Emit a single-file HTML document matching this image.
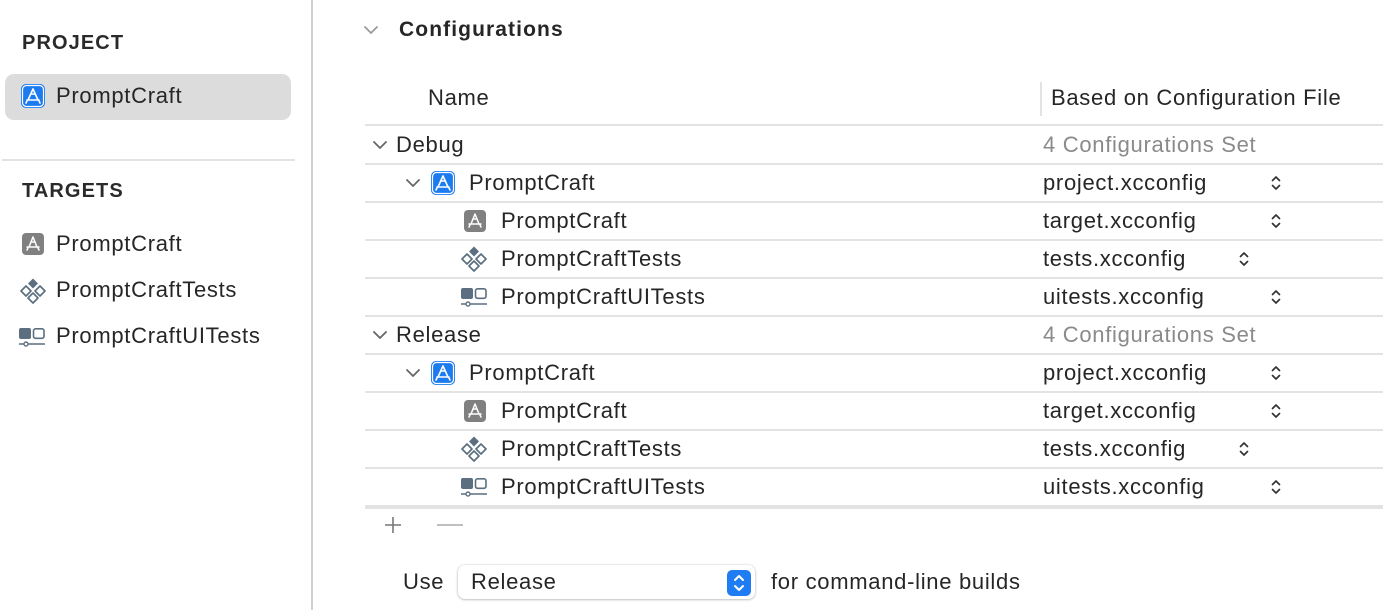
<!DOCTYPE html>
<html><head><meta charset="utf-8"><style>
*{margin:0;padding:0;box-sizing:border-box}
body{width:1383px;height:610px;background:#fff;font-family:"Liberation Sans",Arial,sans-serif;color:#262626;position:relative;overflow:hidden;font-size:22px;letter-spacing:0.7px}
.a{position:absolute;white-space:nowrap}
.h{font-weight:bold;font-size:20px;color:#2a2a2a;letter-spacing:1.1px}
.line{position:absolute;height:2px;background:#e3e3e3}
.g{color:#8a8a8a}
svg{position:absolute}
</style></head><body>
<div class="a" style="left:311px;top:0;width:2px;height:610px;background:#cfcfcf"></div>
<div class="a h" style="left:22px;top:32px">PROJECT</div>
<div class="a" style="left:5px;top:74px;width:286px;height:46px;background:#dcdcdc;border-radius:9px"></div>
<div class="line" style="left:2px;top:159px;width:293px"></div>
<div class="a h" style="left:22px;top:180px">TARGETS</div>
<div id="root"></div>
<script>
function blue(x,y){return `<svg style="left:${x}px;top:${y}px" width="26" height="26" viewBox="0 0 26 26"><rect x="1" y="1" width="24" height="24" rx="5" fill="#1d7bf0"/><rect x="2.5" y="2.5" width="21" height="21" rx="4" fill="none" stroke="#fff" stroke-width="1.2"/><path d="M13 6 L8 17 M13 6 L18 17 M11 11 L15 11 M7 17 L19 17 M7 18 L6 20 M19 18 L20 20" stroke="#fff" stroke-width="1.6" fill="none" stroke-linecap="round"/></svg>`}
function gray(x,y){return `<svg style="left:${x}px;top:${y}px" width="24" height="24" viewBox="0 0 24 24"><rect x="1" y="1" width="22" height="22" rx="4" fill="#808080"/><path d="M12 5 L8 15 M12 5 L16 15 M10 10 L14 10 M6 15 L18 15 M7 16 L6 18 M17 16 L18 18" stroke="#fff" stroke-width="1.5" fill="none" stroke-linecap="round"/></svg>`}
function tests(x,y){return `<svg style="left:${x}px;top:${y}px" width="28" height="28" viewBox="0 0 28 28"><path d="M14 1.5 L19 6.5 L14 11.5 L9 6.5Z" fill="#5c6f80"/><path d="M7 9 L12 14 L7 19 L2 14Z M21 9 L26 14 L21 19 L16 14Z M14 16 L19 21 L14 26 L9 21Z" fill="none" stroke="#5c6f80" stroke-width="1.7" stroke-linejoin="round"/></svg>`}
function ui(x,y){return `<svg style="left:${x}px;top:${y}px" width="28" height="22" viewBox="0 0 28 22"><rect x="1" y="2" width="12" height="11" rx="2" fill="#5c6f80"/><rect x="15.5" y="2.8" width="10.5" height="9.5" rx="2" fill="none" stroke="#5c6f80" stroke-width="1.6"/><path d="M1 18 H27" stroke="#5c6f80" stroke-width="1.6"/><circle cx="8" cy="18" r="2" fill="#fff" stroke="#5c6f80" stroke-width="1.4"/></svg>`}
function chev(x,y,c){c=c||'#666';return `<svg style="left:${x}px;top:${y}px" width="16" height="10" viewBox="0 0 16 10"><path d="M2 2 L8 8 L14 2" fill="none" stroke="${c}" stroke-width="1.8" stroke-linecap="round" stroke-linejoin="round"/></svg>`}
function upd(x,y){return `<svg style="left:${x}px;top:${y}px" width="12" height="18" viewBox="0 0 12 18"><path d="M2.5 6.5 L6 3 L9.5 6.5 M2.5 11.5 L6 15 L9.5 11.5" fill="none" stroke="#333" stroke-width="1.7" stroke-linecap="round" stroke-linejoin="round"/></svg>`}
function t(x,y,s,cls){return `<div class="a ${cls||''}" style="left:${x}px;top:${y}px">${s}</div>`}
let h='';
h+=blue(20,83)+t(56,83,'PromptCraft');
h+=gray(21,232)+t(56,231,'PromptCraft');
h+=tests(19,277)+t(56,277,'PromptCraftTests');
h+=ui(18,326)+t(56,323,'PromptCraftUITests');
h+=chev(363,25,'#9a9a9a')+`<div class="a" style="left:399px;top:18px;font-weight:bold;font-size:21px;color:#262626;letter-spacing:1.1px">Configurations</div>`;
h+=t(428,85,'Name')+`<div class="a" style="left:1040px;top:82px;width:2px;height:34px;background:#e3e3e3"></div>`+t(1051,85,'Based on Configuration File');
h+=`<div class="line" style="left:365px;top:124px;width:1018px"></div>`;
const groups=[['Debug',145],['Release',335]];
for(const [name,y0] of groups){
 let rows=[y0,y0+38,y0+76,y0+114,y0+152];
 h+=chev(372,rows[0]-5)+t(396,rows[0]-13,name)+t(1043,rows[0]-13,'4 Configurations Set','g');
 h+=chev(405,rows[1]-5)+blue(430,rows[1]-13)+t(469,rows[1]-13,'PromptCraft')+t(1043,rows[1]-13,'project.xcconfig')+upd(1270,rows[1]-9);
 h+=gray(463,rows[2]-12)+t(501,rows[2]-13,'PromptCraft')+t(1043,rows[2]-13,'target.xcconfig')+upd(1270,rows[2]-9);
 h+=tests(460,rows[3]-14)+t(501,rows[3]-13,'PromptCraftTests')+t(1043,rows[3]-13,'tests.xcconfig')+upd(1238,rows[3]-9);
 h+=ui(460,rows[4]-11)+t(501,rows[4]-13,'PromptCraftUITests')+t(1043,rows[4]-13,'uitests.xcconfig')+upd(1270,rows[4]-9);
 for(let i=0;i<5;i++){h+=`<div class="line" style="left:365px;top:${rows[i]+18}px;width:1018px;height:${(name=='Release'&&i==4)?4:2}px"></div>`}
}
h+=`<svg style="left:383px;top:515px" width="20" height="20"><path d="M10 2V18M2 10H18" stroke="#777" stroke-width="1.6"/></svg>`;
h+=`<svg style="left:435px;top:515px" width="30" height="20"><path d="M2 10H28" stroke="#aaa" stroke-width="1.6"/></svg>`;
h+=t(403,569,'Use');
h+=`<div class="a" style="left:458px;top:565px;width:297px;height:34px;background:#fff;border-radius:7px;box-shadow:0 0.5px 2.5px rgba(0,0,0,.35)"></div>`;
h+=t(471,569,'Release');
h+=`<svg style="left:727px;top:570px" width="24" height="26" viewBox="0 0 24 26"><rect x="0" y="0" width="24" height="26" rx="5" fill="#1f7cf2"/><path d="M8 10 L12 6 L16 10 M8 16 L12 20 L16 16" fill="none" stroke="#fff" stroke-width="2" stroke-linecap="round" stroke-linejoin="round"/></svg>`;
h+=t(771,569,'for command-line builds');
document.getElementById('root').innerHTML=h;
</script>
</body></html>
